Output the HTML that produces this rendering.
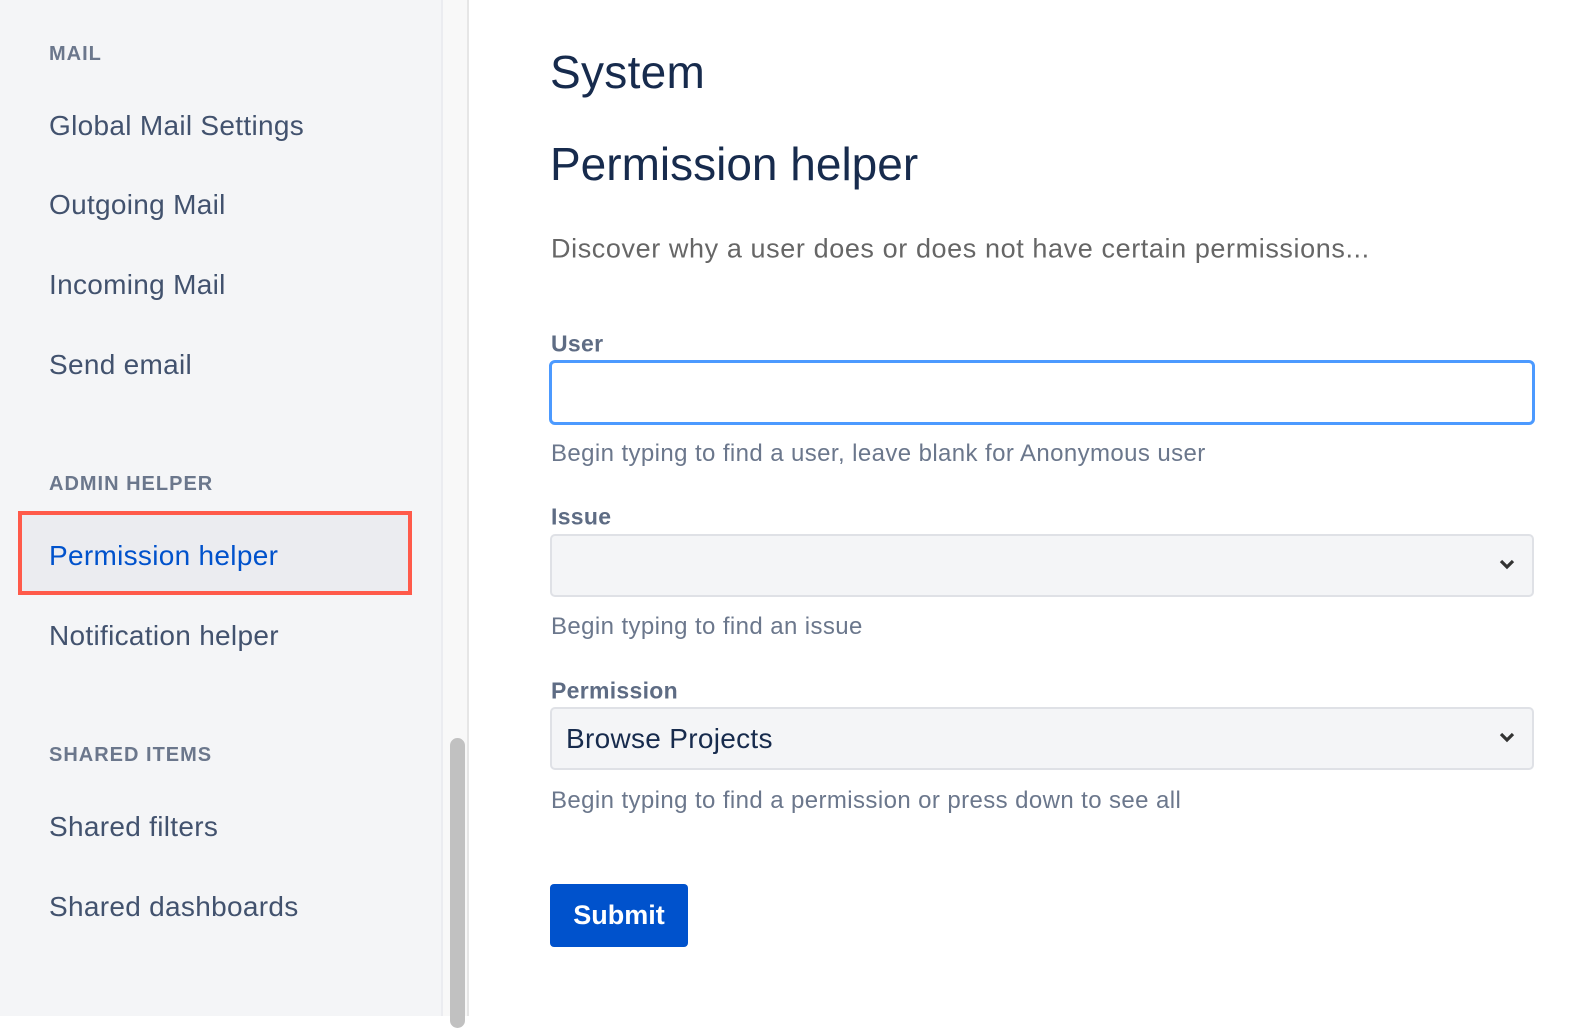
<!DOCTYPE html>
<html><head><meta charset="utf-8"><style>
*{margin:0;padding:0;box-sizing:border-box}
body{width:1574px;height:1016px;overflow:hidden;background:#fff;font-family:"Liberation Sans",sans-serif;position:relative}
.t{position:absolute;white-space:nowrap;line-height:1;transform:translateY(-50%)}
.sb{position:absolute;left:0;top:0;width:441px;height:1016px;background:#f4f5f7}
.h{font-size:20px;font-weight:bold;color:#6b778c;letter-spacing:1px;left:49px}
.n{font-size:28px;color:#42526e;left:49px;letter-spacing:0.3px}
.lbl{font-size:23px;font-weight:bold;color:#5e6c84;left:551px;letter-spacing:0.3px}
.help{font-size:24px;color:#6b778c;left:551px;letter-spacing:0.4px}
.sel{position:absolute;left:550px;width:984px;height:63px;background:#f4f5f7;border:2px solid #dfe1e6;border-radius:5px}
.chev{position:absolute;right:16px;top:21px}
</style></head><body>
<div class="sb"></div>
<div style="position:absolute;left:441px;top:0;width:2px;height:1016px;background:#ebecf0"></div>
<div style="position:absolute;left:443px;top:0;width:26px;height:1016px;background:#f8f8f8;border-right:2px solid #e6e6e6"></div>
<div style="position:absolute;left:450px;top:738px;width:15px;height:290px;background:#c1c1c1;border-radius:8px"></div>
<div class="t h" style="top:54px">MAIL</div>
<div class="t n" style="top:126px">Global Mail Settings</div>
<div class="t n" style="top:205px">Outgoing Mail</div>
<div class="t n" style="top:285px">Incoming Mail</div>
<div class="t n" style="top:365px">Send email</div>
<div class="t h" style="top:484px">ADMIN HELPER</div>
<div style="position:absolute;left:18px;top:511px;width:394px;height:84px;border:4px solid #ff5a4a;background:#ebecf0"></div>
<div class="t n" style="top:556px;color:#0052cc">Permission helper</div>
<div class="t n" style="top:636px">Notification helper</div>
<div class="t h" style="top:755px">SHARED ITEMS</div>
<div class="t n" style="top:827px">Shared filters</div>
<div class="t n" style="top:907px">Shared dashboards</div>

<div class="t" style="left:550px;top:72px;font-size:46px;color:#172b4d;letter-spacing:0.3px">System</div>
<div class="t" style="left:550px;top:164px;font-size:46px;color:#172b4d">Permission helper</div>
<div class="t" style="left:551px;top:249px;font-size:27px;color:#666;letter-spacing:0.6px">Discover why a user does or does not have certain permissions...</div>
<div class="t lbl" style="top:344px">User</div>
<div style="position:absolute;left:549px;top:360px;width:986px;height:65px;border:3px solid #4c9aff;border-radius:6px;background:#fff"></div>
<div class="t help" style="top:454px">Begin typing to find a user, leave blank for Anonymous user</div>
<div class="t lbl" style="top:517px">Issue</div>
<div class="sel" style="top:534px"><svg class="chev" width="18" height="14" viewBox="0 0 18 14"><path d="M3 4l6 6 6-6" stroke="#333" stroke-width="3.2" fill="none"/></svg></div>
<div class="t help" style="top:627px">Begin typing to find an issue</div>
<div class="t lbl" style="top:691px">Permission</div>
<div class="sel" style="top:707px"><svg class="chev" width="18" height="14" viewBox="0 0 18 14"><path d="M3 4l6 6 6-6" stroke="#333" stroke-width="3.2" fill="none"/></svg></div>
<div class="t" style="left:566px;top:739px;font-size:28px;color:#172b4d;letter-spacing:0.3px">Browse Projects</div>
<div class="t help" style="top:801px">Begin typing to find a permission or press down to see all</div>
<div style="position:absolute;left:550px;top:884px;width:138px;height:63px;background:#0052cc;border-radius:4px;color:#fff;font-size:27px;font-weight:bold;text-align:center;line-height:63px">Submit</div>
</body></html>
